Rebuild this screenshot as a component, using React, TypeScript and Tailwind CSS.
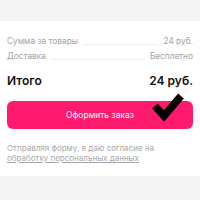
import React from "react";

// ===========================================================

function Row({ label, value }: { label: string; value: string }) {
    return (
        <div className="flex items-end gap-[5px] text-[8.3px] leading-[14px] text-[#a3a3a3]">
            <span className="whitespace-nowrap">{label}</span>
            <span className="flex-1 border-b border-[#eeeeee] mb-[3px]"></span>
            <span className="whitespace-nowrap">{value}</span>
        </div>
    );
}

export default function App() {
    return (
        <div className="w-[200px] h-[200px] bg-[#f5f5f5] pt-[21px] overflow-hidden" style={{ fontFamily: "Inter, 'Noto Sans', sans-serif" }}>
            <div className="bg-white px-[7px] pt-[13px] h-[155px] relative">
                <div className="flex flex-col gap-[1px]">
                    <Row label="Сумма за товары" value="24 руб." />
                    <Row label="Доставка" value="Бесплатно" />
                </div>
                <div className="flex justify-between items-center mt-[10px] text-[12px] leading-[16px] font-semibold text-[#111111]">
                    <span>Итого</span>
                    <span>24 руб.</span>
                </div>
                <button className="mt-[12px] w-full h-[28px] rounded-[6px] bg-[#fe1a6c] text-white text-[8.5px] flex items-center justify-center">
                    Оформить заказ
                </button>
                <p className="mt-[14px] text-[8px] leading-[10px] text-[#a8a8a8]">
                    Отправляя форму, я даю согласие на<br />
                    <span className="underline">обработку персональных данных</span>
                </p>
                <svg className="absolute left-[148px] top-[67px]" width="40" height="36" viewBox="0 0 40 36">
                    <polyline points="7,18 16,28 33,8" fill="none" stroke="#000" strokeWidth="7.5" strokeLinejoin="miter" />
                </svg>
            </div>
        </div>
    );
}
